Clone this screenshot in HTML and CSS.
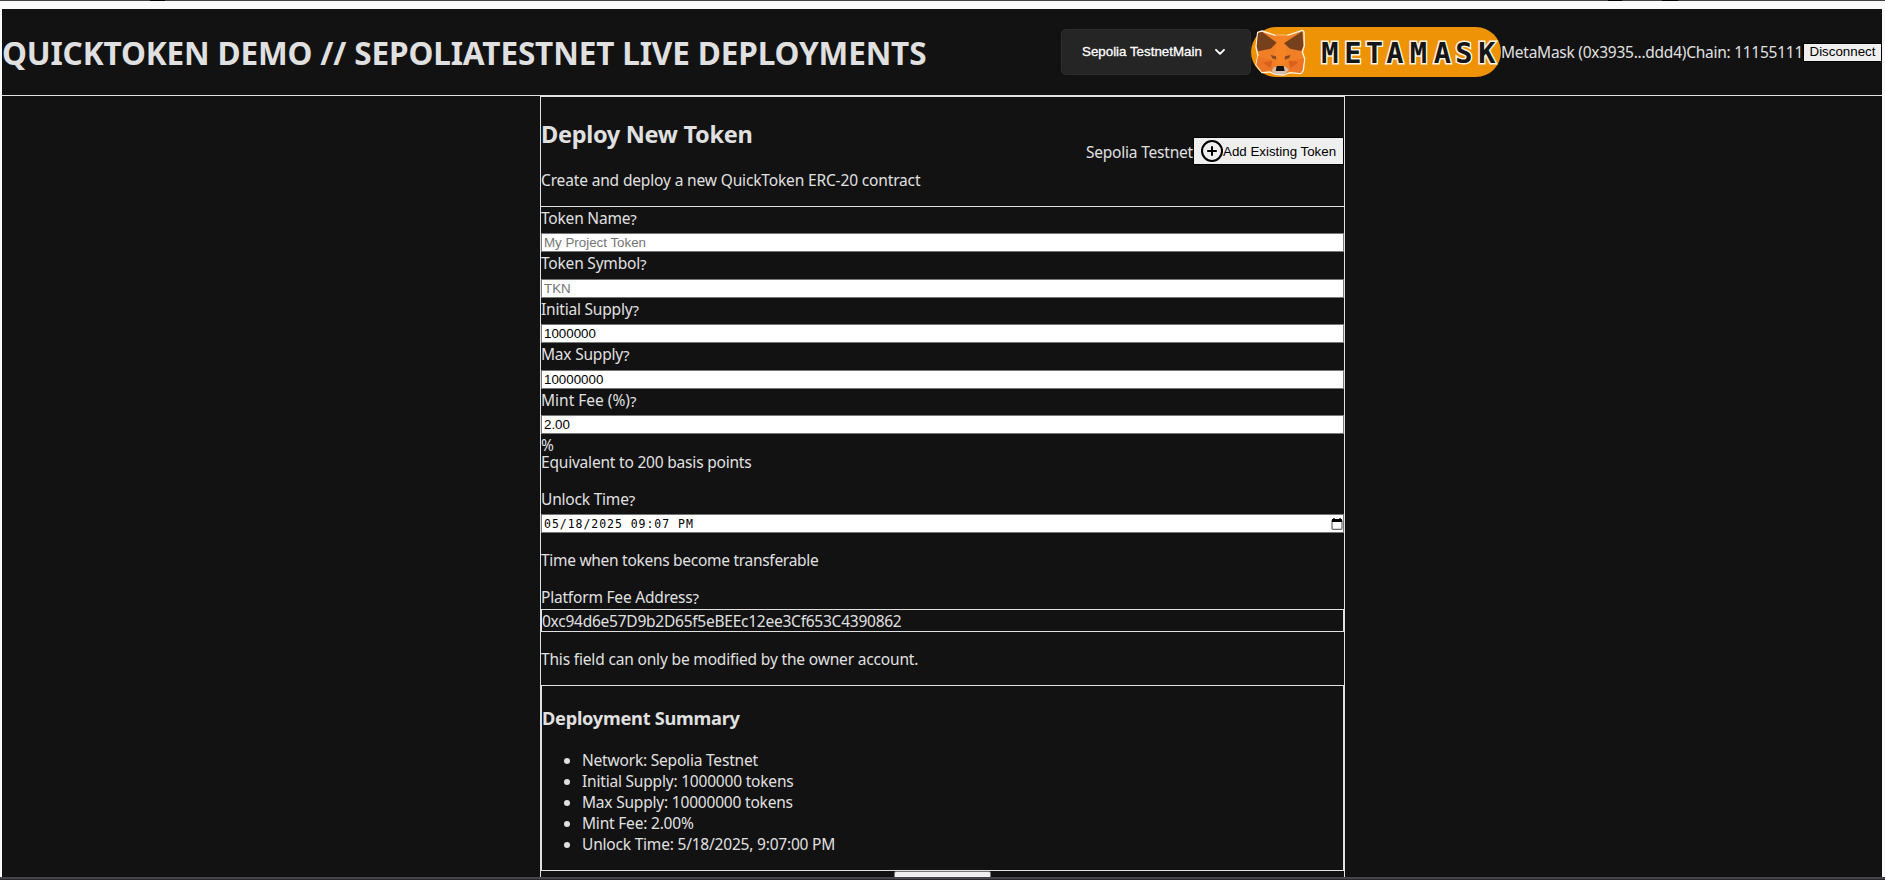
FILE: index.html
```html
<!DOCTYPE html>
<html lang="en">
<head>
<meta charset="utf-8">
<title>QuickToken Demo</title>
<link rel="stylesheet" href="styles.css">
</head>
<body>
<div class="window">
  <div class="edge-top"></div>
  <div class="page">
    <header class="header">
      <h1 class="title">QUICKTOKEN DEMO // SEPOLIATESTNET LIVE DEPLOYMENTS</h1>
      <div class="wallet">
        <button class="network" type="button"><span>Sepolia TestnetMain</span>
          <svg class="chevron" viewBox="0 0 12 12"><path d="M2 3.8 L6 7.8 L10 3.8" fill="none" stroke="#fff" stroke-width="1.9" stroke-linecap="round" stroke-linejoin="round"/></svg>
        </button>
        <svg class="metamask" viewBox="33 21 750 150">
          <rect x="33" y="21" width="750" height="150" rx="75" fill="#ee9206"/>
          <path d="M53 37 L66 33 L106 46 L142 46 L187 31 L192 36 L193 76 L187 96 L194 116 L190 152 L182 161 L150 158 L132 165 L106 163 L90 156 L66 158 L48 134 L54 108 L48 82 Z" fill="#f08025" stroke="#fff4e2" stroke-width="4" stroke-linejoin="round"/>
          <path d="M106 46 L142 46 L138 78 L134 132 H108 L106 78Z" fill="#f78424"/>
          <path d="M54 108 L98 122 L96 150 L66 156 L49 134Z M193 116 L145 122 L148 152 L182 159Z" fill="#ec7424"/>
          <path d="M68 128 L97 122 L91 144Z M176 126 L146 122 L151 144Z" fill="#d8601c"/>
          <path d="M54 39 L66 35 L110 68 L92 86 L54 94 L50 78Z" fill="#76401c"/>
          <path d="M187 34 L190 78 L184 93 L150 86 L132 70Z" fill="#76401c"/>
          <path d="M92 105 L108 109 L109 119 L97 115Z M152 105 L135 109 L134 119 L147 115Z" fill="#8a4a24"/>
          <path d="M98 146 L110 138 H132 L146 148 L138 160 L128 163 H108 L96 154Z" fill="#d6bfae"/>
          <path d="M110 138 H131 L134 153 H107Z" fill="#15110e"/>
          <g class="wordmark">
            <text x="244" y="129">M</text><text x="313" y="129">E</text><text x="377" y="129">T</text><text x="439" y="129">A</text><text x="509" y="129">M</text><text x="581" y="129">A</text><text x="646" y="129">S</text><text x="715" y="129">K</text>
          </g>
        </svg>
        <span class="account">MetaMask (0x3935...ddd4)</span><span class="chain">Chain: 11155111</span>
        <button class="btn disconnect" type="button">Disconnect</button>
      </div>
    </header>
    <main class="card">
      <div class="card-head">
        <div>
          <h2 class="heading">Deploy New Token</h2>
          <p class="text intro">Create and deploy a new QuickToken ERC-20 contract</p>
        </div>
        <div class="actions">
          <span class="text">Sepolia Testnet</span>
          <button class="btn add" type="button"><svg class="plus" viewBox="0 0 22 22"><circle cx="11" cy="11" r="10" /><path d="M11 6.2V15.8M6.2 11H15.8"/></svg>Add Existing Token</button>
        </div>
      </div>
      <form class="form">
        <label class="label">Token Name<span class="help">?</span></label>
        <input class="input" type="text" placeholder="My Project Token">
        <label class="label">Token Symbol<span class="help">?</span></label>
        <input class="input" type="text" placeholder="TKN">
        <label class="label">Initial Supply<span class="help">?</span></label>
        <input class="input" type="text" value="1000000">
        <label class="label">Max Supply<span class="help">?</span></label>
        <input class="input" type="text" value="10000000">
        <label class="label fee">Mint Fee (%)<span class="help">?</span></label>
        <input class="input" type="text" value="2.00">
        <div class="unit">%</div>
        <p class="text note">Equivalent to 200 basis points</p>
        <label class="label">Unlock Time<span class="help">?</span></label>
        <div class="input date"><span>05/18/2025 09:07 PM</span>
          <svg class="calendar" viewBox="0 0 12 12"><rect x="1" y="2" width="10" height="9.3" rx="1" fill="none" stroke="#666" stroke-width="1.2"/><path d="M1 1H2.3V0H3.6V1H8.4V0H9.7V1H11V4H1Z" fill="#000"/></svg>
        </div>
        <p class="text note lock">Time when tokens become transferable</p>
        <label class="label tight">Platform Fee Address<span class="help">?</span></label>
        <div class="address"><div class="text hash">0xc94d6e57D9b2D65f5eBEEc12ee3Cf653C4390862</div></div>
        <p class="text note owner">This field can only be modified by the owner account.</p>
        <section class="summary">
          <h3 class="subheading">Deployment Summary</h3>
          <ul class="list">
            <li>Network: Sepolia Testnet</li>
            <li>Initial Supply: 1000000 tokens</li>
            <li>Max Supply: 10000000 tokens</li>
            <li>Mint Fee: 2.00%</li>
            <li>Unlock Time: 5/18/2025, 9:07:00 PM</li>
          </ul>
        </section>
        <button class="submit" type="button" aria-label="Deploy"></button>
      </form>
    </main>
  </div>
  <div class="edge-bottom"></div>
</div>
</body>
</html>
```
FILE: styles.css
```css
* { box-sizing: border-box; }
body {
  margin: 0;
  background: #fafafa;
  color: #e0e0e0;
  font: 15.5px/23px "Noto Sans", "Open Sans", sans-serif;
  letter-spacing: -0.2px;
  overflow: hidden;
}
.window { width: 1885px; height: 880px; display: flex; flex-direction: column; overflow: hidden; }
.edge-top {
  flex: none;
  height: 9px;
  background:
    linear-gradient(#000, #000) 150px 0 / 15px 1px no-repeat,
    linear-gradient(#000, #000) 1608px 0 / 14px 1px no-repeat,
    linear-gradient(#000, #000) 1662px 0 / 16px 1px no-repeat,
    linear-gradient(#414044, #414044) 0 0 / 100% 1px no-repeat,
    #fafafa;
}
.edge-bottom { flex: none; height: 3px; background: #2a282c; border-top: 2px solid #454446; }
.page { height: 868px; margin: 0 3px 0 2px; background: #121212; overflow: hidden; }

.header { height: 87px; display: flex; align-items: center; justify-content: space-between; border-bottom: 1px solid #e0e0e0; }
.title { margin: 0; font-size: 31.5px; line-height: 43px; letter-spacing: -0.13px; white-space: nowrap; padding-top: 1px; }
.wallet { display: flex; align-items: center; white-space: nowrap; }
.network {
  width: 190px; height: 46px; padding: 0 24px 0 20px;
  display: flex; align-items: center; justify-content: space-between;
  background: #252525; border: 1px solid #2d2d2d; border-radius: 5px;
  color: #fff; font: 13.333px/16px "Liberation Sans", Arial, sans-serif;
  -webkit-text-stroke: 0.3px #fff;
}
.chevron { width: 12px; height: 12px; }
.metamask { width: 250px; height: 50px; flex: none; }
.wordmark {
  font: bold 86px "DejaVu Sans Mono", monospace;
  fill: #161616; stroke: #fff4e2; stroke-width: 9px; paint-order: stroke; letter-spacing: 0;
}
.account { letter-spacing: -0.26px; padding-top: 1px; }
.chain { letter-spacing: -0.26px; padding-top: 1px; }
.btn { background: #efefef; border: 1px solid #000; border-radius: 0; color: #000; font: 13.333px/15px "Liberation Sans", Arial, sans-serif; white-space: nowrap; }
.disconnect { width: 79px; height: 19px; padding: 0 0 1px; }

.card { width: 805px; height: 800px; margin: 0 0 0 538px; border: 1px solid #e0e0e0; }
.card-head { height: 110px; display: flex; justify-content: space-between; border-bottom: 1px solid #e0e0e0; }
.heading { margin: 20px 0; height: 32px; font-size: 23.5px; line-height: 34px; letter-spacing: -0.3px; }
.text { height: 21px; margin: 0; white-space: nowrap; }
.intro { letter-spacing: -0.15px; }
.actions { display: flex; align-items: center; height: 28px; margin-top: 40px; }
.actions .text { padding-top: 1px; height: 23px; }
.add { width: 151px; height: 28px; padding: 0 5px 0 7px; display: flex; align-items: center; }
.plus { width: 22px; height: 22px; flex: none; fill: none; stroke: #000; stroke-width: 2; }

.form { display: flex; flex-direction: column; }
.label { height: 26.4px; white-space: nowrap; }
.label.tight { height: 23px; }
.label.fee { letter-spacing: 0; }
.help { position: relative; top: 1px; font-size: 15px; }
.input {
  height: 19px; width: 100%; padding: 0 2px; background: #fff; color: #000;
  border: 1px solid #767676; border-radius: 0; font: 13.333px/16px "Liberation Sans", Arial, sans-serif;
}
.input::placeholder { color: #757575; }
.date { display: flex; align-items: center; justify-content: space-between; padding: 1px 0 0 2px; font: 11.5px/16px "DejaVu Sans Mono", monospace; letter-spacing: 0.96px; }
.calendar { width: 12px; height: 12px; }
.unit { height: 16.7px; line-height: 22px; }
.note { margin-bottom: 16px; }
.lock { margin-top: 16px; letter-spacing: -0.29px; }
.address { height: 23px; border: 1px solid #e0e0e0; }
.hash { letter-spacing: -0.245px; }
.owner { margin-top: 16px; letter-spacing: -0.17px; }
.summary { height: 186px; border: 1px solid #e0e0e0; padding-top: 19px; }
.subheading { margin: 0 0 20px; height: 25px; font-size: 18.2px; line-height: 27px; letter-spacing: -0.25px; }
.list { margin: 0; padding-left: 40px; line-height: 21px; }
.submit { align-self: center; width: 97px; height: 21px; background: #efefef; border: 1px solid #767676; border-radius: 2px; }
```
